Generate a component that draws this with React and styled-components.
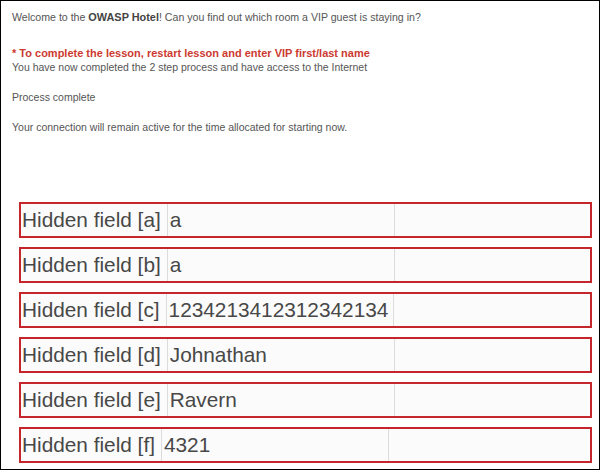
import React from 'react';
import styled, { createGlobalStyle } from 'styled-components';

const GlobalStyle = createGlobalStyle`
  html, body {
    margin: 0;
    padding: 0;
    background: #fff;
  }
  * {
    box-sizing: border-box;
  }
`;

const hiddenFields = [
  { key: 'a', value: 'a' },
  { key: 'b', value: 'a' },
  { key: 'c', value: '1234213412312342134' },
  { key: 'd', value: 'Johnathan' },
  { key: 'e', value: 'Ravern' },
  { key: 'f', value: '4321' },
];

const App = () => (
  <>
    <GlobalStyle />
    <Frame>
      <Intro>
        Welcome to the <b>OWASP Hotel</b>! Can you find out which room a VIP guest is
        staying in?
      </Intro>
      <Messages>
        <p>
          <Notice>* To complete the lesson, restart lesson and enter VIP first/last name</Notice>
          You have now completed the 2 step process and have access to the Internet
        </p>
        <p>Process complete</p>
        <p>Your connection will remain active for the time allocated for starting now.</p>
      </Messages>
      <Fields>
        {hiddenFields.map((field) => (
          <FieldRow key={field.key}>
            <Label>Hidden field [{field.key}]</Label>
            <Value>{field.value}</Value>
            <Filler />
          </FieldRow>
        ))}
      </Fields>
    </Frame>
  </>
);

const Frame = styled.div`
  width: 600px;
  height: 470px;
  border: 1px solid #000;
  padding: 9px 7px 0 18px;
  font-family: 'Liberation Sans', Arial, sans-serif;
  color: #555;
  overflow: hidden;
`;

const Intro = styled.p`
  margin: 0 0 22px -7px;
  font-size: 10.6px;
  line-height: 14px;

  b {
    color: #444;
    font-size: 10.9px;
  }
`;

const Messages = styled.div`
  margin-left: -7px;
  font-size: 10.5px;
  line-height: 14px;

  p {
    margin: 0 0 16px;
  }

  p:last-child {
    margin-bottom: 0;
  }
`;

const Notice = styled.span`
  display: block;
  color: #cc3a30;
  font-weight: bold;
  font-size: 11px;
`;

const Fields = styled.div`
  display: flex;
  flex-direction: column;
  gap: 9px;
  margin-top: 68px;
`;

const FieldRow = styled.div`
  display: flex;
  height: 36px;
  border: 2px solid #c4262c;
  background: #fbfbfb;
  font-size: 20.8px;
  color: #484848;
`;

const Label = styled.div`
  display: flex;
  align-items: center;
  padding: 0 6px 0 1px;
  white-space: nowrap;
`;

const Value = styled.div`
  display: flex;
  align-items: center;
  width: 228px;
  flex-shrink: 0;
  padding-left: 2px;
  border-left: 1px solid #dcdcdc;
  border-right: 1px solid #dcdcdc;
  white-space: nowrap;
`;

const Filler = styled.div`
  flex: 1;
`;

export default App;
